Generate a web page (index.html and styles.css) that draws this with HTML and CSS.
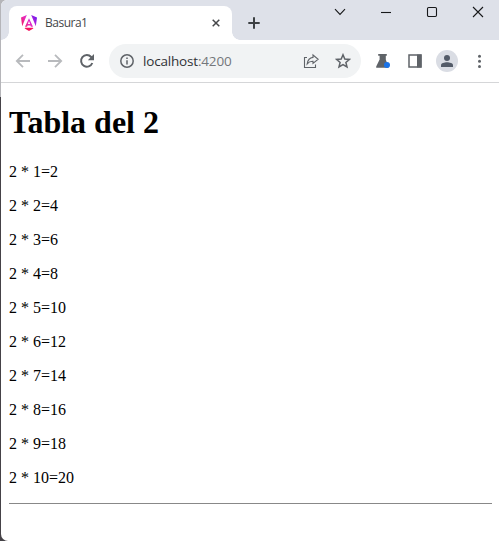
FILE: index.html
```html
<!DOCTYPE html>
<html lang="es">
<head>
<meta charset="utf-8">
<title>Basura1</title>
<link rel="stylesheet" href="styles.css">
</head>
<body>
<div class="window">
  <header class="tabstrip">
    <div class="tab">
      <svg class="logo" width="16" height="16" viewBox="0 0 16 16">
        <defs>
          <linearGradient id="g" x1="0" y1="0.7" x2="1" y2="0.2"><stop offset="0" stop-color="#f0206c"/><stop offset=".45" stop-color="#e52bc8"/><stop offset="1" stop-color="#6a18f0"/></linearGradient>
        </defs>
        <path fill="url(#g)" d="M0 2.6 5.8 0 1.2 11.3ZM10.2 0 16 2.6 14.8 11.3ZM8 3.2 12 11.8H9.9L9.4 10.5H6.6L6.1 11.8H4ZM8 6.1 6.9 8.9H9.1Z" fill-rule="evenodd"/>
        <path fill="#f5145f" d="M4 12.7H12L12.3 13.5 8 16 3.7 13.5Z"/>
      </svg>
      <span class="tab-title">Basura1</span>
      <svg class="tab-close" width="8" height="8" viewBox="0 0 8 8"><path d="M.7.7 7.3 7.3M7.3.7.7 7.3"/></svg>
    </div>
    <svg class="new-tab" width="12" height="12" viewBox="0 0 12 12"><path d="M6 .3V11.7M.3 6H11.7"/></svg>
    <div class="controls">
      <span><svg width="12" height="12" viewBox="0 0 12 12"><path d="M1 3.2 6 8.5 11 3.2"/></svg></span>
      <span><svg width="12" height="12" viewBox="0 0 12 12"><path d="M1 6.5H11"/></svg></span>
      <span><svg width="12" height="12" viewBox="0 0 12 12"><rect x="1.5" y="1.5" width="9" height="9" rx="1.2"/></svg></span>
      <span><svg width="12" height="12" viewBox="0 0 12 12"><path d="M1 1 11 11M11 1 1 11"/></svg></span>
    </div>
  </header>
  <nav class="toolbar">
    <span class="slot faded"><svg width="16" height="16" viewBox="0 0 16 16"><path d="M15 8H2M8 1.8 1.8 8 8 14.2"/></svg></span>
    <span class="slot faded"><svg width="16" height="16" viewBox="0 0 16 16"><path d="M1 8H14M8 1.8 14.2 8 8 14.2"/></svg></span>
    <span class="slot reload"><svg width="16" height="16" viewBox="0 0 16 16"><path d="M13.3 10A5.8 5.8 0 1 1 12.2 4L13.5 5.5"/><path class="solid" d="M15 1V7.2H8.8Z"/></svg></span>
    <div class="omnibox">
      <span class="slot"><svg width="16" height="16" viewBox="0 0 16 16"><circle cx="8" cy="8" r="6.2"/><path d="M8 7.2V11.4M8 4.5V6"/></svg></span>
      <span class="url">localhost<span class="port">:4200</span></span>
      <span class="slot thin"><svg width="16" height="16" viewBox="0 0 16 16"><path d="M4 4.5H1.5V14.5H12.5V11.5"/><path d="M10 2 15.2 6.2 10 10.4V8.2C7.2 8.1 5.6 9 4.2 10.8 4.7 7.4 6.6 4.8 10 4.4Z"/></svg></span>
      <span class="slot"><svg width="16" height="16" viewBox="0 0 16 16"><path d="M8 1.8 9.8 6.1 14.4 6.4 10.9 9.4 12 13.9 8 11.5 4 13.9 5.1 9.4 1.6 6.4 6.2 6.1Z"/></svg></span>
    </div>
    <span class="slot"><svg width="16" height="16" viewBox="0 0 16 16"><path class="solid" d="M3.2 1H11.8V2.8H10.8V6.4L13.6 14.8H1.2V13.4L4.6 6.4V2.8H3.2Z"/><circle class="dot" cx="12" cy="12" r="3"/></svg></span>
    <span class="slot"><svg width="16" height="16" viewBox="0 0 16 16"><rect x="2" y="2" width="12" height="12"/><path class="solid" d="M10 1.5H14.5V14.5H10Z"/></svg></span>
    <span class="slot"><span class="avatar"><svg width="14" height="14" viewBox="0 0 14 14"><circle cx="7" cy="4" r="3"/><path d="M1 13V11.2C1 9.2 4.5 8.3 7 8.3S13 9.2 13 11.2V13Z"/></svg></span></span>
    <span class="slot"><svg width="16" height="16" viewBox="0 0 16 16"><g class="solid"><circle cx="8.5" cy="3.2" r="1.5"/><circle cx="8.5" cy="8.3" r="1.5"/><circle cx="8.5" cy="13.4" r="1.5"/></g></svg></span>
  </nav>
  <main class="page">
    <h1>Tabla del 2</h1>
    <p>2 * 1=2</p>
    <p>2 * 2=4</p>
    <p>2 * 3=6</p>
    <p>2 * 4=8</p>
    <p>2 * 5=10</p>
    <p>2 * 6=12</p>
    <p>2 * 7=14</p>
    <p>2 * 8=16</p>
    <p>2 * 9=18</p>
    <p>2 * 10=20</p>
    <hr>
  </main>
</div>
</body>
</html>
```
FILE: styles.css
```css
* { box-sizing: border-box; }
body {
  margin: 0;
  height: 541px;
  overflow: hidden;
  background: linear-gradient(#b5b5b9 97px, #454247 97px);
}
svg { display: block; fill: none; flex: none; }
.window {
  height: 541px;
  margin-left: 1px;
  background: #fff;
  border-radius: 6px 0 0 7px;
  overflow: hidden;
}
.tabstrip {
  display: flex;
  height: 40px;
  padding-left: 8px;
  background: #dee1e9;
}
.tab {
  position: relative;
  display: flex;
  align-items: center;
  width: 223px;
  height: 34px;
  margin-top: 6px;
  padding: 0 12px;
  background: #fff;
  border-radius: 8px 8px 0 0;
}
.tab::before, .tab::after {
  content: "";
  position: absolute;
  bottom: 0;
  width: 8px;
  height: 8px;
}
.tab::before { left: -8px; background: radial-gradient(circle at 0 0, transparent 7.5px, #fff 8px); }
.tab::after { right: -8px; background: radial-gradient(circle at 100% 0, transparent 7.5px, #fff 8px); }
.tab-title {
  flex: 1;
  margin-left: 8px;
  font: 12px/16px "Open Sans", "Noto Sans", sans-serif;
  letter-spacing: -.5px;
  color: #45474a;
}
.tab-close { stroke: #45474a; stroke-width: 1.5; }
.new-tab { margin: 17px 0 0 16px; stroke: #3c4043; stroke-width: 2; }
.controls {
  display: flex;
  width: 182px;
  height: 24px;
  margin-left: auto;
}
.controls span {
  display: flex;
  flex: 0 0 46px;
  align-items: center;
  justify-content: center;
}
.controls svg { stroke: #17181a; stroke-width: 1.1; }
.toolbar {
  display: flex;
  align-items: center;
  height: 43px;
  padding: 0 4px 1px 6px;
  border-bottom: 1px solid #d5d6d8;
}
.slot {
  display: flex;
  flex: 0 0 32px;
  height: 32px;
  align-items: center;
  justify-content: center;
}
.slot svg { stroke: #5f6368; stroke-width: 1.5; }
.slot .solid { fill: #5f6368; stroke: none; }
.slot .dot { fill: #1a73e8; stroke: none; }
.faded svg { stroke: #b8babd; stroke-width: 1.8; }
.reload svg { stroke-width: 2; }
.thin svg { stroke-width: 1.1; }
.omnibox {
  display: flex;
  align-items: center;
  flex: 1;
  height: 34px;
  margin: 0 6px;
  padding: 0 2px;
  background: #f1f3f4;
  border-radius: 17px;
}
.url {
  flex: 1;
  font: 13.5px/20px "Open Sans", "Noto Sans", sans-serif;
  letter-spacing: -.18px;
  color: #303236;
}
.port { color: #74777b; }
.avatar {
  display: flex;
  width: 22px;
  height: 22px;
  align-items: center;
  justify-content: center;
  background: #dadde4;
  border-radius: 50%;
}
.slot .avatar svg { fill: #535b68; stroke: none; }
.page {
  padding: .1px 7px 0 8px;
  font: 16px/18px "Liberation Serif", "Times New Roman", serif;
  color: #000;
}
.page h1 { margin: 20.44px 0 22.44px; font-size: 32px; line-height: 37px; }
.page p { margin: 16px 0; }
.page hr { margin: 16px 0; border: 0; height: 1px; background: #888; }
```
